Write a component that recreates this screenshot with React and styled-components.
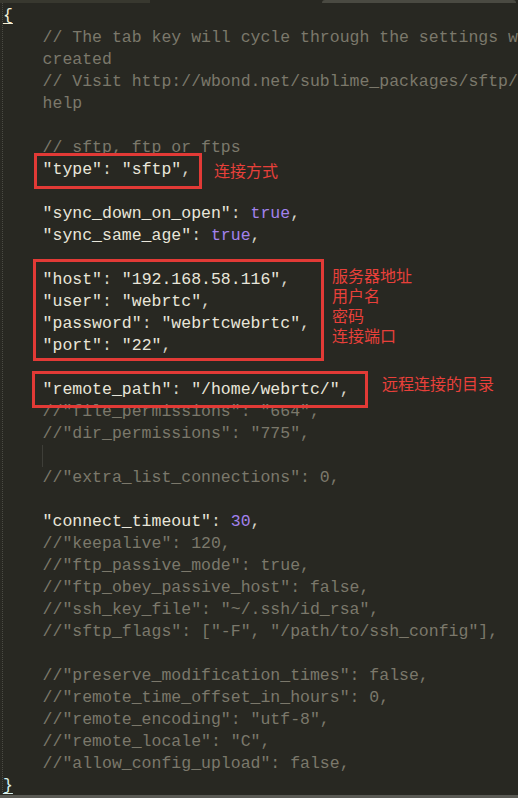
import React from "react";
import styled, { createGlobalStyle } from "styled-components";

const Global = createGlobalStyle`
  html, body { margin: 0; padding: 0; background: #282822; }
  body { width: 518px; height: 798px; overflow: hidden; }
`;

const Editor = styled.div`
  width: 518px;
  height: 798px;
  display: flex;
  flex-direction: column;
  background: #282822;
  overflow: hidden;
`;

const TabStrip = styled.div`
  height: 3px;
  display: flex;
  flex: none;
`;

const TabEdge = styled.div`
  width: ${(p) => p.$w}px;
  height: 3px;
  background: ${(p) => p.$color};
  border-top-left-radius: ${(p) => (p.$round ? 3 : 0)}px;
  border-top-right-radius: ${(p) => (p.$round ? 3 : 0)}px;
`;

const Code = styled.div`
  position: relative;
  flex: 1;
  overflow: hidden;
  padding: 2px 0 0 3px;
  font-family: "Liberation Mono", "DejaVu Sans Mono", monospace;
  font-size: 16.5px;
  color: #e6e4d8;
  background-image: linear-gradient(#4a4a43 50%, transparent 50%);
  background-size: 1px 2px;
  background-repeat: repeat-y;
  background-position: 2px 0;
`;

const Line = styled.div`
  position: relative;
  height: 22px;
  line-height: 22px;
  white-space: pre;
`;

const Guide = styled.span`
  position: absolute;
  left: 39px;
  top: 0;
  width: 1px;
  height: 22px;
  background: #3e3e38;
`;

const colors = {
  c: "#7b786b",
  s: "#e8e6da",
  p: "#d6d4c8",
  n: "#a282ec",
  b: "#f3efd6",
  e: "#d8f0ec",
};

const Tok = styled.span`
  color: ${(p) => colors[p.$k]};
  text-decoration: ${(p) => (p.$k === "b" || p.$k === "e" ? "underline" : "none")};
  text-underline-offset: 3px;
`;

const Mark = styled.div`
  position: absolute;
  left: ${(p) => p.$l}px;
  top: ${(p) => p.$t}px;
  width: ${(p) => p.$w}px;
  height: ${(p) => p.$h}px;
  border: 3px solid #e23a36;
  box-sizing: border-box;
  pointer-events: none;
`;

const Note = styled.div`
  position: absolute;
  left: ${(p) => p.$l}px;
  top: ${(p) => p.$t}px;
  display: flex;
  flex-direction: column;
  font-family: "Noto Sans CJK SC", "Noto Sans", sans-serif;
  font-size: 16px;
  line-height: 20px;
  color: #e8403a;
  white-space: nowrap;
`;

const I = "    ";
const lines = [
  [["b", "{"]],
  [["c", I + "// The tab key will cycle through the settings when first"]],
  [["c", I + "created"]],
  [["c", I + "// Visit http://wbond.net/sublime_packages/sftp/settings for"]],
  [["c", I + "help"]],
  [],
  [["c", I + "// sftp, ftp or ftps"]],
  [["s", I + '"type"'], ["p", ": "], ["s", '"sftp"'], ["p", ","]],
  [],
  [["s", I + '"sync_down_on_open"'], ["p", ": "], ["n", "true"], ["p", ","]],
  [["s", I + '"sync_same_age"'], ["p", ": "], ["n", "true"], ["p", ","]],
  [],
  [["s", I + '"host"'], ["p", ": "], ["s", '"192.168.58.116"'], ["p", ","]],
  [["s", I + '"user"'], ["p", ": "], ["s", '"webrtc"'], ["p", ","]],
  [["s", I + '"password"'], ["p", ": "], ["s", '"webrtcwebrtc"'], ["p", ","]],
  [["s", I + '"port"'], ["p", ": "], ["s", '"22"'], ["p", ","]],
  [],
  [["s", I + '"remote_path"'], ["p", ": "], ["s", '"/home/webrtc/"'], ["p", ","]],
  [["c", I + '//"file_permissions": "664",']],
  [["c", I + '//"dir_permissions": "775",']],
  "guide",
  [["c", I + '//"extra_list_connections": 0,']],
  [],
  [["s", I + '"connect_timeout"'], ["p", ": "], ["n", "30"], ["p", ","]],
  [["c", I + '//"keepalive": 120,']],
  [["c", I + '//"ftp_passive_mode": true,']],
  [["c", I + '//"ftp_obey_passive_host": false,']],
  [["c", I + '//"ssh_key_file": "~/.ssh/id_rsa",']],
  [["c", I + '//"sftp_flags": ["-F", "/path/to/ssh_config"],']],
  [],
  [["c", I + '//"preserve_modification_times": false,']],
  [["c", I + '//"remote_time_offset_in_hours": 0,']],
  [["c", I + '//"remote_encoding": "utf-8",']],
  [["c", I + '//"remote_locale": "C",']],
  [["c", I + '//"allow_config_upload": false,']],
  [["e", "}"]],
];

export default function App() {
  return (
    <Editor>
      <Global />
      <TabStrip>
        <TabEdge $w={150} $color="#38382f" />
        <TabEdge $w={172} $color="#282822" />
        <TabEdge $w={194} $color="#4a4a42" $round />
      </TabStrip>
      <Code>
        {lines.map((segs, i) =>
          segs === "guide" ? (
            <Line key={i}>
              <Guide />
            </Line>
          ) : (
            <Line key={i}>
              {segs.length === 0
                ? " "
                : segs.map(([k, t], j) => (
                    <Tok key={j} $k={k}>
                      {t}
                    </Tok>
                  ))}
            </Line>
          )
        )}
        <Mark $l={34} $t={150} $w={168} $h={36} />
        <Mark $l={33} $t={256} $w={291} $h={102} />
        <Mark $l={32} $t={368} $w={336} $h={37} />
        <Note $l={214} $t={157}>
          <span>连接方式</span>
        </Note>
        <Note $l={332} $t={262}>
          <span>服务器地址</span>
          <span>用户名</span>
          <span>密码</span>
          <span>连接端口</span>
        </Note>
        <Note $l={382} $t={370}>
          <span>远程连接的目录</span>
        </Note>
      </Code>
      <TabEdge $w={518} $color="#5a5a54" />
    </Editor>
  );
}
